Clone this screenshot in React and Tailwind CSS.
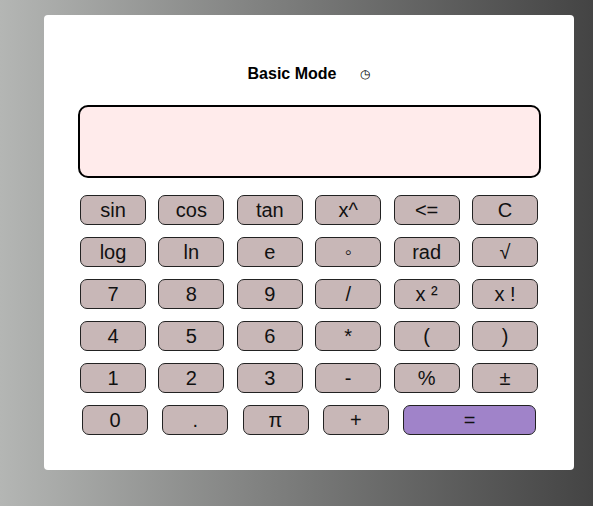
import React from "react";

const rows = [
  ["sin", "cos", "tan", "x^", "<=", "C"],
  ["log", "ln", "e", "◦", "rad", "√"],
  ["7", "8", "9", "/", "x ²", "x !"],
  ["4", "5", "6", "*", "(", ")"],
  ["1", "2", "3", "-", "%", "±"],
];

const btn =
  "h-[30px] w-[66px] rounded-[7px] border border-[#222] bg-[#c8b7b7] text-[20px] leading-none text-[#111] flex items-center justify-center";

export default function App() {
  return (
    <div
      className="h-[506px] w-full bg-gradient-to-r from-[#b4b6b4] to-[#444444] pt-[15px] pl-[44px]"
      style={{ fontFamily: '"Liberation Sans", Arial, sans-serif' }}
    >
      <div className="w-[530px] h-[455px] bg-white rounded-[4px] pt-[51px]">
        <div className="flex items-center justify-center h-[16px]">
          <span className="text-[16px] font-bold text-black">Basic Mode</span>
          <span className="ml-[24px] text-[12px] leading-none text-black">◷</span>
        </div>
        <div className="ml-[34px] mt-[23px] w-[463px] h-[73px] rounded-[10px] border-2 border-black bg-[#ffebeb]" />
        <div className="ml-[36px] mt-[17px] w-[458px] flex flex-col gap-[12px]">
          {rows.map((r, i) => (
            <div key={i} className="grid grid-cols-6 gap-x-[12.4px]">
              {r.map((k) => (
                <div key={k} className={btn}>
                  {k}
                </div>
              ))}
            </div>
          ))}
          <div className="flex gap-[14.25px] pl-[2px]">
            {["0", ".", "π"].map((k) => (
              <div key={k} className={btn}>
                {k}
              </div>
            ))}
            <div className={btn}>+</div>
            <div className="h-[30px] w-[133px] rounded-[7px] border border-[#222] bg-[#a083c9] text-[20px] leading-none text-[#111] flex items-center justify-center">
              =
            </div>
          </div>
        </div>
      </div>
    </div>
  );
}
